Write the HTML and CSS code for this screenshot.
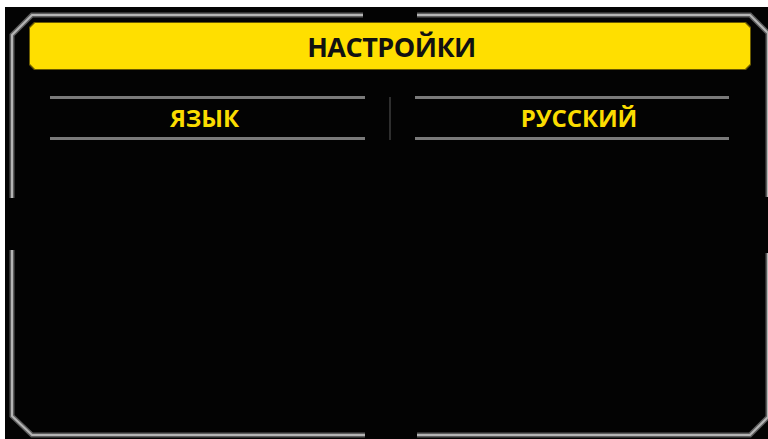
FILE: index.html
```html
<!DOCTYPE html>
<html lang="ru">
<head>
<meta charset="utf-8">
<title>Настройки</title>
<link rel="stylesheet" href="styles.css">
</head>
<body>
<div class="screen">
  <svg class="frame" width="763" height="432" viewBox="0 0 763 432" aria-hidden="true">
    <g class="frame-edge">
      <path d="M358 8 H27 L7 28 V191"/>
      <path d="M7 243 V409 L27 428 H360"/>
      <path d="M412 428 H745 L763 410 V246"/>
      <path d="M763 190 V26 L745 8 H412"/>
    </g>
    <g class="frame-core">
      <path d="M358 8 H27 L7 28 V191"/>
      <path d="M7 243 V409 L27 428 H360"/>
      <path d="M412 428 H745 L763 410 V246"/>
      <path d="M763 190 V26 L745 8 H412"/>
    </g>
  </svg>

  <header class="title-bar">
    <div class="title-fill">
      <h1 class="title">НАСТРОЙКИ</h1>
    </div>
  </header>

  <div class="settings">
    <div class="setting-row">
      <div class="cell cell-label">ЯЗЫК</div>
      <div class="divider"></div>
      <div class="cell cell-value">РУССКИЙ</div>
    </div>
  </div>
</div>
</body>
</html>
```

FILE: styles.css
```css
html, body {
  margin: 0;
  padding: 0;
  background: #ffffff;
}

.screen {
  position: relative;
  margin: 7px 0 0 5px;
  width: 763px;
  height: 432px;
  background: #030303;
  padding: 15px 0 0 24px;
  box-sizing: border-box;
  overflow: hidden;
  font-family: "Open Sans", "Noto Sans", sans-serif;
}

/* chamfered outer frame with gaps at the middle of each side */
.frame {
  position: absolute;
  left: 0;
  top: 0;
  pointer-events: none;
}

.frame path {
  fill: none;
  stroke-linejoin: miter;
}

.frame-edge path {
  stroke: #5c5c5c;
  stroke-width: 5;
}

.frame-core path {
  stroke: #b4b4b4;
  stroke-width: 2;
}

/* yellow title bar with clipped corners and a dark rim */
.title-bar {
  width: 722px;
  height: 48px;
  background: #6a5a00;
  clip-path: polygon(5px 0, calc(100% - 5px) 0, 100% 5px, 100% calc(100% - 5px), calc(100% - 5px) 100%, 5px 100%, 0 calc(100% - 5px), 0 5px);
  padding: 1px;
  box-sizing: border-box;
}

.title-fill {
  height: 100%;
  background: #ffdf00;
  clip-path: polygon(5px 0, calc(100% - 5px) 0, 100% 5px, 100% calc(100% - 5px), calc(100% - 5px) 100%, 5px 100%, 0 calc(100% - 5px), 0 5px);
  display: flex;
  align-items: center;
  justify-content: center;
}

.title {
  margin: 0;
  font-size: 27px;
  font-weight: 700;
  color: #111111;
  letter-spacing: -0.5px;
  line-height: 1;
  padding-left: 3px;
}

.settings {
  margin: 26px 0 0 21px;
}

.setting-row {
  display: grid;
  grid-template-columns: 315px 50px 314px;
  height: 44px;
}

.cell {
  border-top: 3px solid #7a7a7a;
  border-bottom: 3px solid #7a7a7a;
  display: flex;
  align-items: center;
  justify-content: center;
  color: #fadc00;
  font-weight: 700;
  font-size: 24px;
  letter-spacing: -0.1px;
  line-height: 1;
}

.cell-label {
  padding-right: 6px;
}

.cell-value {
  padding-left: 14px;
}

.divider {
  justify-self: center;
  width: 2px;
  margin-top: 1px;
  background: #2e2e2e;
}
```
